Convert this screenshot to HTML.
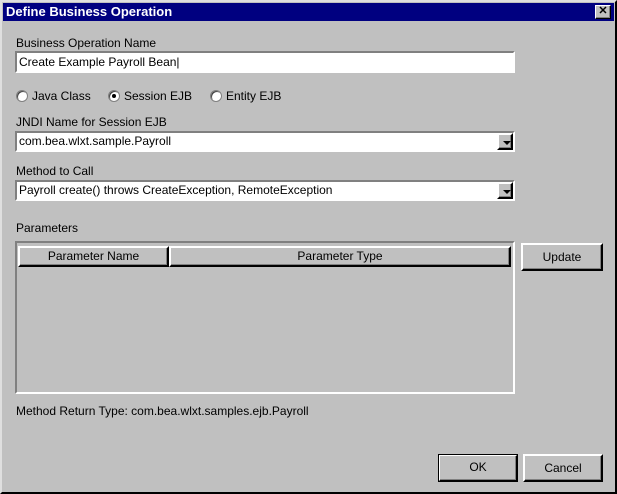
<html><head><style>
body{margin:0;width:617px;height:494px;background:#c0c0c0;font-family:"Liberation Sans",sans-serif;font-size:12px;color:#000;position:relative;overflow:hidden}
.a{position:absolute}
.win{left:0;top:0;width:613px;height:490px;border:2px solid;border-color:#dfdfdf #000 #000 #dfdfdf}
.title{left:3px;top:3px;width:611px;height:18px;background:#000080;color:#fff;font-weight:bold;font-size:13px;line-height:18px;text-indent:3px}
.sunk{border:2px solid;border-color:#808080 #fff #fff #808080;box-sizing:border-box;background:#fff}
.btn{box-sizing:border-box;border:2px solid;border-color:#fff #000 #000 #fff;box-shadow:inset -1px -1px 0 #808080;background:#c0c0c0;text-align:center}
.radio{width:12px;height:12px;border-radius:50%;box-sizing:border-box;border:1px solid #808080;background:#fff;box-shadow:inset 1px 1px 0 #404040}
.arr{position:absolute;left:4px;top:6px;width:0;height:0;border-left:4px solid transparent;border-right:4px solid transparent;border-top:4px solid #000}
</style></head><body>
<div class="a win"></div>
<div class="a title">Define Business Operation</div>
<div class="a btn" style="left:595px;top:5px;width:16px;height:14px;border-width:1px;font-size:11px;line-height:11px;font-weight:bold">✕</div>
<div class="a" style="left:16px;top:36px">Business Operation Name</div>
<div class="a sunk" style="left:15px;top:51px;width:500px;height:22px;padding:2px 2px;line-height:15px">Create Example Payroll Bean|</div>
<div class="a radio" style="left:16px;top:90px"></div><div class="a" style="left:32px;top:89px">Java Class</div>
<div class="a radio" style="left:108px;top:90px"><div class="a" style="left:3px;top:3px;width:4px;height:4px;background:#000;border-radius:50%"></div></div><div class="a" style="left:124px;top:89px">Session EJB</div>
<div class="a radio" style="left:210px;top:90px"></div><div class="a" style="left:226px;top:89px">Entity EJB</div>
<div class="a" style="left:16px;top:115px">JNDI Name for Session EJB</div>
<div class="a sunk" style="left:15px;top:131px;width:500px;height:21px;padding:1px 2px;line-height:15px">com.bea.wlxt.sample.Payroll<div class="a btn" style="right:0;top:0;width:16px;height:17px"><div class="arr"></div></div></div>
<div class="a" style="left:16px;top:164px">Method to Call</div>
<div class="a sunk" style="left:15px;top:180px;width:500px;height:21px;padding:1px 2px;line-height:15px">Payroll create() throws CreateException, RemoteException<div class="a btn" style="right:0;top:0;width:16px;height:17px"><div class="arr"></div></div></div>
<div class="a" style="left:16px;top:221px">Parameters</div>
<div class="a sunk" style="left:15px;top:241px;width:500px;height:153px;background:#c0c0c0">
<div class="a btn" style="left:1px;top:3px;width:151px;height:21px;line-height:17px">Parameter Name</div>
<div class="a btn" style="left:152px;top:3px;width:342px;height:21px;line-height:17px">Parameter Type</div>
</div>
<div class="a btn" style="left:521px;top:243px;width:82px;height:28px;line-height:24px">Update</div>
<div class="a" style="left:16px;top:404px">Method Return Type: com.bea.wlxt.samples.ejb.Payroll</div>
<div class="a btn" style="left:438px;top:454px;width:80px;height:28px;line-height:22px;outline:1px solid #000;outline-offset:-1px">OK</div>
<div class="a btn" style="left:523px;top:454px;width:80px;height:28px;line-height:24px">Cancel</div>
</body></html>
